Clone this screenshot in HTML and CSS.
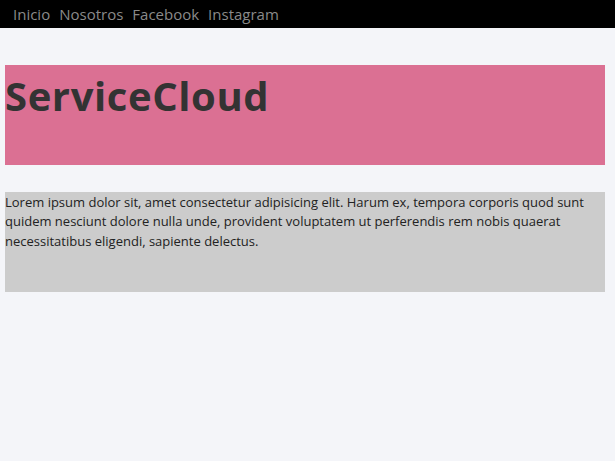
FILE: index.html
```html
<!DOCTYPE html>
<html lang="es">
<head>
<meta charset="utf-8">
<title>ServiceCloud</title>
<link rel="stylesheet" href="styles.css">
</head>
<body>
<nav class="nav">
  <a class="nav-link" href="#">Inicio</a>
  <a class="nav-link" href="#">Nosotros</a>
  <a class="nav-link" href="#">Facebook</a>
  <a class="nav-link" href="#">Instagram</a>
</nav>
<main class="main">
  <header class="hero">
    <h1 class="hero-title">ServiceCloud</h1>
  </header>
  <section class="content">
    <p class="content-text">Lorem ipsum dolor sit, amet consectetur adipisicing elit. Harum ex, tempora corporis quod sunt quidem nesciunt dolore nulla unde, provident voluptatem ut perferendis rem nobis quaerat necessitatibus eligendi, sapiente delectus.</p>
  </section>
</main>
</body>
</html>
```
FILE: styles.css
```css
* { box-sizing: border-box; }
html, body { margin: 0; padding: 0; }
body {
  background: #f4f5f9;
  font-family: "Open Sans", "Liberation Sans", sans-serif;
  color: #222;
  width: 615px;
  height: 461px;
}
.nav {
  background: #000;
  height: 28px;
  display: flex;
  align-items: center;
  gap: 9px;
  padding-left: 13px;
}
.nav-link {
  color: #8a8a8a;
  text-decoration: none;
  font-size: 15px;
}
.main {
  padding: 37px 0 0 5px;
  display: flex;
  flex-direction: column;
  gap: 27px;
}
.hero {
  width: 600px;
  height: 100px;
  background: #db7093;
}
.hero-title {
  margin: 0;
  font-size: 40px;
  line-height: 62px;
  font-weight: 700;
  letter-spacing: 0.6px;
  color: #333;
}
.content {
  width: 600px;
  height: 100px;
  background: #ccc;
}
.content-text {
  margin: 0;
  padding-top: 1px;
  font-size: 13px;
  line-height: 19.3px;
  color: #222;
}
```
